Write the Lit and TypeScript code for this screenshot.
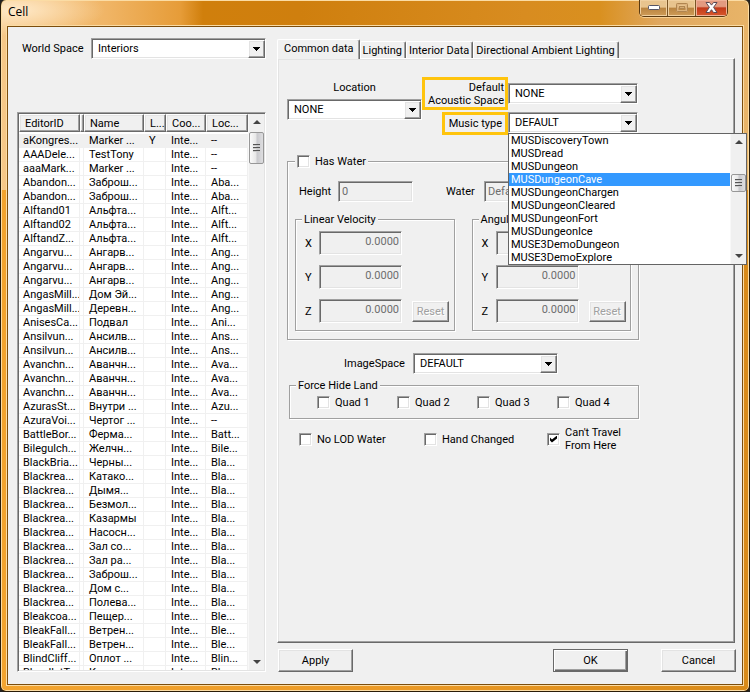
import { LitElement, html, css, svg } from "lit";
import { customElement, property, state } from "lit/decorators.js";
import { classMap } from "lit/directives/class-map.js";

const base = css`
  :host {
    display: block;
    box-sizing: border-box;
    font: 11px/13px Roboto, "Liberation Sans", sans-serif;
    color: #000;
  }
  *,
  *::before,
  *::after {
    box-sizing: border-box;
  }
  .sunken {
    border: 1px solid;
    border-color: #a0a0a0 #fff #fff #a0a0a0;
    box-shadow: inset 1px 1px #696969, inset -1px -1px #e3e3e3;
  }
  .raised {
    border: 1px solid;
    border-color: #fff #696969 #696969 #fff;
    box-shadow: inset -1px -1px #a0a0a0, inset 1px 1px #e3e3e3;
    background: #f0f0f0;
  }
`;

@customElement("cell-combo")
class CellCombo extends LitElement {
  @property() label = "";
  @property() value = "";
  @property({ type: Boolean }) disabled = false;

  static styles = [
    base,
    css`
      .combo {
        display: grid;
        height: 21px;
      }
      select {
        grid-area: 1 / 1;
        appearance: none;
        width: 100%;
        margin: 0;
        padding: 0 20px 0 6px;
        border-radius: 0;
        outline: 0;
        background: #fff;
        color: #000;
        font: inherit;
      }
      select:disabled {
        padding-left: 3px;
        background: #f0f0f0;
        color: #6d6d6d;
        opacity: 1;
      }
      .arrow {
        grid-area: 1 / 1;
        justify-self: end;
        display: grid;
        place-items: center;
        width: 17px;
        margin: 2px 1px 1px 0;
        pointer-events: none;
      }
    `,
  ];

  render() {
    return html`<div class="combo">
      <select class="sunken" aria-label=${this.label} ?disabled=${this.disabled}>
        <option>${this.value}</option>
      </select>
      <span class="arrow raised">
        <svg width="7" height="4" viewBox="0 0 7 4" shape-rendering="crispEdges"><path d="M0 0h7v1h-1v1h-1v1h-1v1h-1v-1h-1v-1h-1v-1h-1z" /></svg>
      </span>
    </div>`;
  }
}

@customElement("cell-scrollbar")
class CellScrollbar extends LitElement {
  static styles = [
    base,
    css`
      :host {
        display: flex;
        flex-direction: column;
        align-items: center;
        width: 16px;
        background: #f0f0f0;
        border-left: 1px solid #f8f8f8;
      }
      svg {
        flex: none;
        margin: 6px 0;
      }
      .track {
        flex: 1;
        align-self: stretch;
        padding-top: var(--thumb-start, 2px);
      }
      .thumb {
        display: flex;
        flex-direction: column;
        justify-content: center;
        gap: 1px;
        height: var(--thumb-size, 32px);
        border: 1px solid #979797;
        border-radius: 2px;
        background: linear-gradient(90deg, #fafafa, #e6e6e6 48%, #c8c8cc 52%, #dedee0);
      }
      .grip {
        height: 2px;
        margin: 0 3px;
        background: linear-gradient(#555 50%, #ccc 50%);
      }
    `,
  ];

  render() {
    const grips = [0, 1, 2].map(() => html`<i class="grip"></i>`);
    return html`
      <svg width="8" height="4" viewBox="0 0 8 4"><path d="M0 4L4 0l4 4z" fill="#444" /></svg>
      <div class="track"><div class="thumb">${grips}</div></div>
      <svg width="8" height="4" viewBox="0 0 8 4"><path d="M0 0l4 4 4-4z" fill="#444" /></svg>
    `;
  }
}

type Row = [string, string, string, string];

const ROWS: Row[] = [
  ["aKongres...", "Marker ...", "Y", "--"],
  ["AAADele...", "TestTony", "", "--"],
  ["aaaMark...", "Marker ...", "", "--"],
  ["Abandon...", "Заброш...", "", "Aba..."],
  ["Abandon...", "Заброш...", "", "Aba..."],
  ["Alftand01", "Альфта...", "", "Alft..."],
  ["Alftand02", "Альфта...", "", "Alft..."],
  ["AlftandZ...", "Альфта...", "", "Alft..."],
  ["Angarvu...", "Ангарв...", "", "Ang..."],
  ["Angarvu...", "Ангарв...", "", "Ang..."],
  ["Angarvu...", "Ангарв...", "", "Ang..."],
  ["AngasMill...", "Дом Эй...", "", "Ang..."],
  ["AngasMill...", "Деревн...", "", "Ang..."],
  ["AnisesCa...", "Подвал", "", "Ani..."],
  ["Ansilvun...", "Ансилв...", "", "Ans..."],
  ["Ansilvun...", "Ансилв...", "", "Ans..."],
  ["Avanchn...", "Аванчн...", "", "Ava..."],
  ["Avanchn...", "Аванчн...", "", "Ava..."],
  ["Avanchn...", "Аванчн...", "", "Ava..."],
  ["AzurasSt...", "Внутри ...", "", "Azu..."],
  ["AzuraVoi...", "Чертог ...", "", "--"],
  ["BattleBor...", "Ферма...", "", "Batt..."],
  ["Bilegulch...", "Желчн...", "", "Bile..."],
  ["BlackBria...", "Черны...", "", "Bla..."],
  ["Blackrea...", "Катако...", "", "Bla..."],
  ["Blackrea...", "Дымя...", "", "Bla..."],
  ["Blackrea...", "Безмол...", "", "Bla..."],
  ["Blackrea...", "Казармы", "", "Bla..."],
  ["Blackrea...", "Насосн...", "", "Bla..."],
  ["Blackrea...", "Зал со...", "", "Bla..."],
  ["Blackrea...", "Зал ра...", "", "Bla..."],
  ["Blackrea...", "Заброш...", "", "Bla..."],
  ["Blackrea...", "Дом с...", "", "Bla..."],
  ["Blackrea...", "Полева...", "", "Bla..."],
  ["Bleakcoa...", "Пещер...", "", "Ble..."],
  ["BleakFall...", "Ветрен...", "", "Ble..."],
  ["BleakFall...", "Ветрен...", "", "Ble..."],
  ["BlindCliff...", "Оплот ...", "", "Blin..."],
  ["BloodletT...", "Кровар...", "", "Blo..."],
];

@customElement("cell-list")
class CellList extends LitElement {
  static styles = [
    base,
    css`
      :host {
        display: flex;
        min-height: 0;
      }
      .list {
        flex: 1;
        display: flex;
        min-width: 0;
        padding: 1px;
        background: #fff;
      }
      .view {
        flex: 1;
        min-width: 0;
        overflow: hidden;
      }
      table {
        width: 100%;
        table-layout: fixed;
        border-spacing: 0;
      }
      .id { width: 61px; }
      .thin { width: 4px; }
      .name { width: 60px; }
      .flag { width: 22px; }
      .coords { width: 40px; }
      th {
        height: 18px;
        padding: 0 0 0 5px;
        font-weight: normal;
        text-align: left;
        white-space: nowrap;
        overflow: hidden;
      }
      td {
        height: 14px;
        padding: 0 0 0 5px;
        border: solid #f0f0f0;
        border-width: 0 1px 1px 0;
        white-space: nowrap;
        overflow: hidden;
      }
      td:first-child {
        padding-left: 4px;
      }
      .slim {
        padding: 0;
      }
      tbody::before {
        content: "";
        display: block;
        height: 2px;
      }
      .current td {
        background: #f0f0f0;
      }
      cell-scrollbar {
        --thumb-start: 2px;
        --thumb-size: 32px;
      }
    `,
  ];

  render() {
    return html`<div class="list sunken">
      <div class="view">
        <table>
          <colgroup>
            <col class="id" /><col class="thin" /><col class="name" /><col class="flag" /><col class="coords" /><col />
          </colgroup>
          <thead>
            <tr>
              <th class="raised">EditorID</th>
              <th class="raised slim"></th>
              <th class="raised">Name</th>
              <th class="raised">L...</th>
              <th class="raised">Coo...</th>
              <th class="raised">Loc...</th>
            </tr>
          </thead>
          <tbody>
            ${ROWS.map(
              ([id, name, flag, loc], i) => html`<tr class=${classMap({ current: i === 0 })}>
                <td>${id}</td>
                <td class="slim"></td>
                <td>${name}</td>
                <td>${flag}</td>
                <td>Inte...</td>
                <td>${loc}</td>
              </tr>`
            )}
          </tbody>
        </table>
      </div>
      <cell-scrollbar></cell-scrollbar>
    </div>`;
  }
}

const TRACKS = [
  "MUSDiscoveryTown",
  "MUSDread",
  "MUSDungeon",
  "MUSDungeonCave",
  "MUSDungeonChargen",
  "MUSDungeonCleared",
  "MUSDungeonFort",
  "MUSDungeonIce",
  "MUSE3DemoDungeon",
  "MUSE3DemoExplore",
];

@customElement("cell-form")
class CellForm extends LitElement {
  @state() private track = "MUSDungeonCave";

  static styles = [
    base,
    css`
      :host {
        padding: 18px 8px 18px 9px;
      }
      .sources {
        display: grid;
        grid-template-columns: 135px 86px 130px;
        grid-template-rows: 33px 23px;
        row-gap: 2px;
      }
      .location {
        grid-row: 1 / 3;
        display: flex;
        flex-direction: column;
        gap: 5px;
        padding-top: 4px;
        text-align: center;
      }
      .marked {
        display: flex;
        align-items: center;
        justify-content: flex-end;
        border: 3px solid #ffc40d;
        padding: 0 1px;
        text-align: right;
        white-space: nowrap;
      }
      .music-label {
        justify-self: end;
        padding: 0 3px 0 4px;
      }
      .acoustic {
        align-self: center;
      }
      .music {
        position: relative;
      }
      .popup {
        position: absolute;
        z-index: 2;
        top: 21px;
        left: 0;
        display: flex;
        width: 239px;
        border: 1px solid #646464;
        background: #fff;
      }
      .options {
        flex: 1;
        margin: 0;
        padding: 0;
        list-style: none;
      }
      .options li {
        padding-left: 2px;
        cursor: default;
      }
      .options .chosen {
        background: #3399ff;
        color: #fff;
      }
      .popup cell-scrollbar {
        --thumb-start: 24px;
        --thumb-size: 18px;
      }
      fieldset {
        min-width: 0;
        margin: 0;
        border: 1px solid #a0a0a0;
        box-shadow: 1px 1px #fff, inset 1px 1px #fff;
      }
      legend {
        margin: 0;
        padding: 0 2px;
        background: #f0f0f0;
      }
      .check {
        display: flex;
        align-items: center;
        gap: 5px;
      }
      .check input {
        appearance: none;
        flex: none;
        display: grid;
        place-items: center;
        width: 13px;
        height: 13px;
        margin: 0;
        background: #fff;
      }
      .check input:checked::before {
        content: "";
        width: 7px;
        height: 7px;
        background: #000;
        clip-path: polygon(0 28%, 28% 57%, 100% 0, 100% 43%, 28% 100%, 0 71%);
      }
      .water {
        width: 352px;
        margin-top: 20px;
        padding: 13px 7px 8px;
      }
      .water-row {
        display: grid;
        grid-template-columns: 39px 108px 38px 100px;
        align-items: center;
        margin: 0 0 11px 4px;
      }
      .water-row .field {
        width: 75px;
      }
      .field {
        margin: 0;
        padding: 0 3px;
        height: 21px;
        min-width: 0;
        border-radius: 0;
        background: #f0f0f0;
        color: #6d6d6d;
        font: inherit;
      }
      .velocities {
        display: flex;
        gap: 17px;
      }
      .velocity {
        display: grid;
        grid-template-columns: 14px 83px 47px;
        row-gap: 10px;
        align-items: center;
        width: 160px;
        padding: 5px 6px 7px 9px;
      }
      .velocity legend {
        margin-left: -3px;
      }
      .velocity label {
        grid-column: 1;
      }
      .velocity .field {
        grid-column: 2;
        height: 24px;
        padding: 0 2px 4px;
        text-align: right;
      }
      .reset {
        grid-column: 3;
        grid-row: 3;
        justify-self: end;
        width: 37px;
        height: 21px;
        padding: 0;
        font: inherit;
        color: #a0a0a0;
        text-shadow: 1px 1px #fff;
      }
      .image-space {
        display: flex;
        align-items: center;
        gap: 8px;
        margin: 13px 0 5px 57px;
      }
      .image-space cell-combo {
        width: 145px;
      }
      .quads {
        display: grid;
        grid-template-columns: repeat(4, 80px);
        width: 350px;
        margin-left: 2px;
        padding: 4px 0 9px 27px;
      }
      .quads legend {
        margin-left: -21px;
      }
      .flags {
        display: grid;
        grid-template-columns: 125px 123px 80px;
        align-items: center;
        margin: 7px 0 0 12px;
      }
      .wrap {
        width: 58px;
      }
    `,
  ];

  private check(label: string, checked = false) {
    return html`<label class="check"
      ><input type="checkbox" class="sunken" .checked=${checked} /><span>${label}</span></label
    >`;
  }

  private velocity(title: string) {
    return html`<fieldset class="velocity">
      <legend>${title}</legend>
      ${["X", "Y", "Z"].map((axis) => {
        const id = `${title}-${axis}`.replace(" ", "-").toLowerCase();
        return html`<label for=${id}>${axis}</label><input id=${id} class="field sunken" value="0.0000" disabled />`;
      })}
      <button class="reset raised" disabled>Reset</button>
    </fieldset>`;
  }

  render() {
    return html`
      <div class="sources">
        <div class="location">
          <span>Location</span>
          <cell-combo label="Location" value="NONE"></cell-combo>
        </div>
        <div class="marked">Default<br />Acoustic Space</div>
        <cell-combo class="acoustic" label="Default Acoustic Space" value="NONE"></cell-combo>
        <div class="marked music-label">Music type</div>
        <div class="music">
          <cell-combo label="Music type" value="DEFAULT"></cell-combo>
          <div class="popup">
            <ul class="options" role="listbox" aria-label="Music type">
              ${TRACKS.map(
                (t) => html`<li
                  role="option"
                  class=${classMap({ chosen: t === this.track })}
                  aria-selected=${t === this.track}
                  @mouseenter=${() => (this.track = t)}
                >
                  ${t}
                </li>`
              )}
            </ul>
            <cell-scrollbar></cell-scrollbar>
          </div>
        </div>
      </div>

      <fieldset class="water">
        <legend>${this.check("Has Water")}</legend>
        <div class="water-row">
          <label for="height">Height</label>
          <input id="height" class="field sunken" value="0" disabled />
          <span>Water</span>
          <cell-combo label="Water" value="Default" disabled></cell-combo>
        </div>
        <div class="velocities">${this.velocity("Linear Velocity")} ${this.velocity("Angular Velocity")}</div>
      </fieldset>

      <div class="image-space">
        <span>ImageSpace</span>
        <cell-combo label="ImageSpace" value="DEFAULT"></cell-combo>
      </div>

      <fieldset class="quads">
        <legend>Force Hide Land</legend>
        ${[1, 2, 3, 4].map((n) => this.check(`Quad ${n}`))}
      </fieldset>

      <div class="flags">
        ${this.check("No LOD Water")} ${this.check("Hand Changed")}
        <label class="check"
          ><input type="checkbox" class="sunken" .checked=${true} /><span class="wrap">Can't Travel From Here</span></label
        >
      </div>
    `;
  }
}

const TABS = ["Common data", "Lighting", "Interior Data", "Directional Ambient Lighting"];

@customElement("app-root")
class AppRoot extends LitElement {
  @state() private tab = 0;

  static styles = [
    base,
    css`
      :host {
        background: #222;
      }
      .window {
        display: flex;
        flex-direction: column;
        height: 100vh;
        border: 1px solid #2a1c08;
        border-top: 0;
        border-radius: 6px;
        box-shadow: inset 0 0 0 1px #fbdca4;
        background:
          radial-gradient(ellipse 90px 26px at 14px 10px, #ffe9c8, transparent),
          linear-gradient(90deg, #f6c888, #f0b566 14%, #e69c38 24%, #d07f0c 27%, #cf7f0e 40%, #d88c20 70%, #d9901f 80%, #e0a860 88%, #e8b468) top / 100% 190px no-repeat,
          linear-gradient(90deg, #f3a42f, #ec9a26 50%, #d98a18);
      }
      .title {
        display: flex;
        justify-content: space-between;
        height: 26px;
        padding: 0 21px 0 7px;
      }
      h1 {
        margin: 0;
        font: 12px/24px "Open Sans", "Noto Sans", sans-serif;
      }
      .controls {
        display: flex;
        height: 17px;
        border: 1px solid #5a3a10;
        border-top: 0;
        border-radius: 0 0 5px 5px;
        box-shadow: 0 1px #f6cf94;
        overflow: hidden;
      }
      .control {
        display: grid;
        place-items: center;
        width: 28px;
        padding: 0;
        border: 0;
        border-right: 1px solid #7a5424;
        background: linear-gradient(#e8c48e 45%, #b98440 50%, #cf9c58);
        box-shadow: inset 0 0 0 1px #f0d0a0;
      }
      .control svg {
        margin-bottom: 2px;
      }
      .close {
        width: 31px;
        border-right: 0;
        background: linear-gradient(#e39a80 40%, #c23a1a 50%, #d9582c);
        box-shadow: inset 0 0 0 1px #eeb098;
      }
      .client {
        flex: 1;
        min-height: 0;
        display: grid;
        grid-template: minmax(0, 1fr) / 249px minmax(0, 1fr);
        column-gap: 11px;
        margin: 0 6px 6px;
        padding: 11px 6px 12px 9px;
        border: 1px solid #7c4d0c;
        box-shadow: 0 0 0 1px #fbdca4;
        background: #f0f0f0;
      }
      .browser,
      .editor {
        display: flex;
        flex-direction: column;
        min-width: 0;
        min-height: 0;
      }
      .world {
        display: flex;
        align-items: center;
        justify-content: space-between;
        padding-left: 5px;
      }
      .world cell-combo {
        width: 175px;
      }
      cell-list {
        flex: 1;
        margin-top: 53px;
      }
      .tabs {
        display: flex;
        align-items: flex-end;
        height: 20px;
      }
      .tab {
        height: 17px;
        padding: 0 3px 0 2px;
        border: 1px solid;
        border-color: #fff #696969 transparent #fff;
        border-bottom: 0;
        border-radius: 2px 2px 0 0;
        box-shadow: inset -1px 0 #a0a0a0;
        background: #f0f0f0;
        color: inherit;
        font: inherit;
      }
      .tab.active {
        z-index: 1;
        height: 20px;
        margin-bottom: -1px;
        padding: 0 5px 2px 6px;
      }
      .panel {
        flex: 1;
        min-height: 0;
        margin-right: 1px;
      }
      .actions {
        display: flex;
        gap: 33px;
        margin: 6px 0 0 1px;
      }
      .action {
        width: 75px;
        height: 23px;
        padding: 0;
        color: inherit;
        font: inherit;
      }
      .ok {
        margin-left: auto;
        border-color: #696969;
        box-shadow: inset 1px 1px #fff, inset -1px -1px #696969, inset -2px -2px #a0a0a0;
      }
    `,
  ];

  render() {
    return html`<main class="window">
      <header class="title">
        <h1>Cell</h1>
        <div class="controls">
          <button class="control" aria-label="Minimize">
            <svg width="12" height="5" viewBox="0 0 12 5">${svg`<rect x=".5" y=".5" width="11" height="4" rx="1" fill="#fff" stroke="#555566" />`}</svg>
          </button>
          <button class="control" aria-label="Maximize" disabled>
            <svg width="12" height="9" viewBox="0 0 12 9" fill="none"><rect x="1.5" y="1" width="9" height="7" stroke="#dcb27c" stroke-width="2" /><rect x=".5" y=".5" width="11" height="8" rx="1" stroke="#b08550" /><rect x="3.5" y="3.5" width="5" height="2" stroke="#b08550" /></svg>
          </button>
          <button class="control close" aria-label="Close">
            <svg width="13" height="11" viewBox="0 0 13 11"><path d="M1 .5h3.5l2 2.6 2-2.6H12L8.6 5.3 12 10.5H8.5l-2-2.8-2 2.8H1l3.4-5.2z" fill="#fff" stroke="#5a4a55" /></svg>
          </button>
        </div>
      </header>
      <div class="client">
        <section class="browser">
          <div class="world">
            <span>World Space</span>
            <cell-combo label="World Space" value="Interiors"></cell-combo>
          </div>
          <cell-list></cell-list>
        </section>
        <section class="editor">
          <div class="tabs" role="tablist">
            ${TABS.map(
              (name, i) => html`<button
                role="tab"
                class=${classMap({ tab: true, active: i === this.tab })}
                aria-selected=${i === this.tab}
                @click=${() => (this.tab = i)}
              >
                ${name}
              </button>`
            )}
          </div>
          <div class="panel raised" role="tabpanel">
            ${this.tab === 0 ? html`<cell-form></cell-form>` : null}
          </div>
          <div class="actions">
            <button class="action raised">Apply</button>
            <button class="action raised ok">OK</button>
            <button class="action raised">Cancel</button>
          </div>
        </section>
      </div>
    </main>`;
  }
}
